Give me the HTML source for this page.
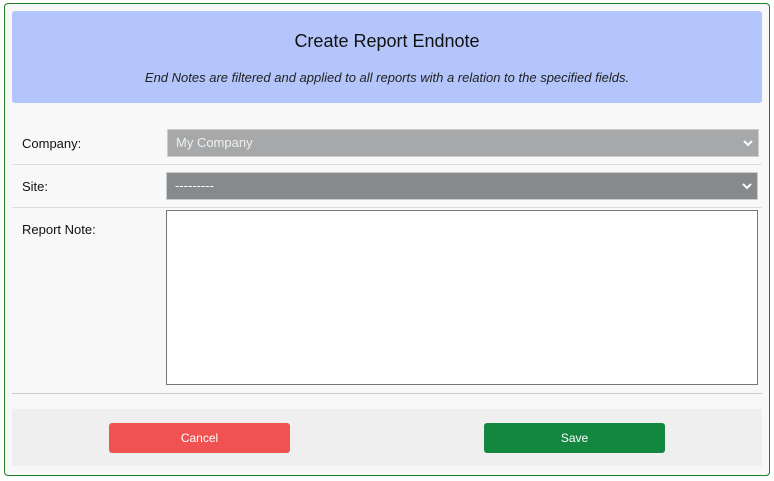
<!DOCTYPE html>
<html><head><style>
body{margin:0;width:774px;height:481px;background:#fff;font-family:"Liberation Sans",sans-serif;position:relative;overflow:hidden}
.outer{position:absolute;left:4px;top:3px;width:764px;height:471px;border:1px solid #1e7e24;border-radius:4px;background:#f8f8f8}
.abs{position:absolute}
.hdr{left:12px;top:11px;width:750px;height:92px;background:#b3c5fa;border-radius:3px}
.title{left:0;right:0;top:31px;text-align:center;font-size:18px;color:#111}
.sub{left:0;right:0;top:70px;text-align:center;font-size:13px;font-style:italic;color:#222}
.lbl{left:22px;font-size:13px;color:#111}
.line{left:12px;width:750px;height:1px;background:#ddd}
.sel{height:26px;border:1px solid #ccc;color:#fff;font-size:13px;line-height:26px;padding-left:8px;box-sizing:border-box}
.chev{position:absolute;right:5px;top:9px}
.btn{top:423px;width:181px;height:30px;border-radius:3px;color:#fff;font-size:12px;text-align:center;line-height:30px}
</style></head><body>
<div class="outer"></div>
<div class="abs hdr"></div>
<div class="abs title">Create Report Endnote</div>
<div class="abs sub">End Notes are filtered and applied to all reports with a relation to the specified fields.</div>
<div class="abs lbl" style="top:136px">Company:</div>
<div class="abs sel" style="left:167px;top:129px;width:592px;height:28px;background:#a7a8a9;color:#f0f0f0">My Company<svg class="chev" width="10" height="8" viewBox="0 0 10 8"><path d="M1 2l4 4 4-4" stroke="#fff" stroke-width="2" fill="none"/></svg></div>
<div class="abs line" style="top:164px"></div>
<div class="abs lbl" style="top:179px">Site:</div>
<div class="abs sel" style="left:166px;top:172px;width:592px;height:28px;background:#868a8c">---------<svg class="chev" width="10" height="8" viewBox="0 0 10 8"><path d="M1 2l4 4 4-4" stroke="#fff" stroke-width="2" fill="none"/></svg></div>
<div class="abs line" style="top:207px"></div>
<div class="abs lbl" style="top:222px">Report Note:</div>
<div class="abs" style="left:166px;top:210px;width:590px;height:173px;border:1px solid #777;background:#fff"></div>
<div class="abs line" style="top:393px;background:#ccc"></div>
<div class="abs" style="left:12px;top:409px;width:750px;height:57px;background:#efefef"></div>
<div class="abs btn" style="left:109px;background:#f05252">Cancel</div>
<div class="abs btn" style="left:484px;background:#138640">Save</div>
</body></html>
